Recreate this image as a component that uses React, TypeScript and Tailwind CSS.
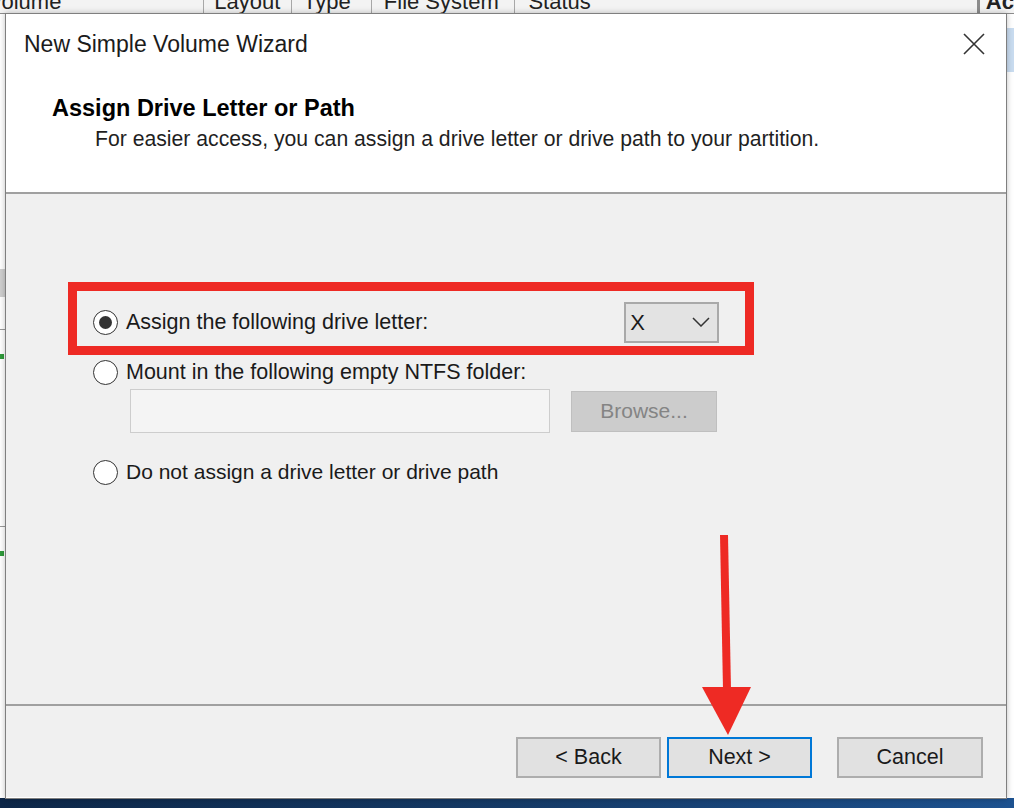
import React from 'react';

const Radio: React.FC<{ checked?: boolean }> = ({ checked }) => (
  <span className="w-[25px] h-[25px] rounded-full border-[1.5px] border-[#333333] bg-white flex items-center justify-center shrink-0">
    {checked && <span className="w-[13px] h-[13px] rounded-full bg-[#333333]" />}
  </span>
);

const WinButton: React.FC<{ label: string; focused?: boolean; className?: string }> = ({ label, focused, className }) => (
  <button
    className={`h-[41px] w-[145px] bg-[#e1e1e1] text-[21.5px] text-[#1a1a1a] flex items-center justify-center ${
      focused ? 'border-2 border-[#0078d7]' : 'border-2 border-[#adadad]'
    } ${className ?? ''}`}
  >
    {label}
  </button>
);

const App: React.FC = () => {
  return (
    <div className="relative w-[1014px] h-[808px] overflow-hidden bg-white font-['Liberation_Sans',Arial,sans-serif] text-[#1a1a1a]">
      {/* disk management window behind */}
      <div className="flex flex-col h-full">
        <div className="h-[14px] overflow-hidden bg-[#f3f3f3] border-b border-[#8c8c8c] text-[22px] leading-[22px] text-[#222]">
          <div className="flex mt-[-9px] whitespace-nowrap">
            <div className="w-[205px] border-r border-[#a8a8a8] overflow-hidden">
              <span className="ml-[-12px]">Volume</span>
            </div>
            <div className="w-[88px] pl-[10px] border-r border-[#a8a8a8]">Layout</div>
            <div className="w-[80px] pl-[11px] border-r border-[#a8a8a8]">Type</div>
            <div className="w-[144px] pl-[12px] border-r border-[#a8a8a8]">File System</div>
            <div className="w-[466px] pl-[13px] border-r-[3px] border-[#8c8c8c]">Status</div>
            <div className="pl-[6px] font-bold">Ac</div>
          </div>
        </div>
        <div className="flex-1 flex">
          <div className="w-[6px] flex flex-col">
            <div className="h-[255px]" />
            <div className="h-[28px] bg-[#cfcfcf]" />
            <div className="h-[33px] border-b border-[#9a9a9a]" />
            <div className="mt-[24px] h-[5px] w-[4px] bg-[#2f9a3a]" />
            <div className="h-[168px] border-b border-[#9a9a9a]" />
            <div className="mt-[24px] h-[5px] w-[4px] bg-[#2f9a3a]" />
            <div className="flex-1" />
          </div>
          <div className="flex-1" />
          <div className="w-[8px] flex flex-col">
            <div className="h-[14px]" />
            <div className="h-[44px] bg-[#c9dcf0]" />
            <div className="flex-1" />
          </div>
        </div>
        <div className="h-[10px] bg-gradient-to-r from-[#0d2748] via-[#153a66] to-[#1d5290]" />
      </div>

      {/* wizard dialog */}
      <div className="absolute left-[5px] top-[13px] w-[1002px] h-[786px] border border-[#7f7f7f] bg-[#f0f0f0] flex flex-col shadow-[0_0_6px_rgba(0,0,0,0.25)]">
        <div className="h-[180px] bg-white flex flex-col border-b-2 border-[#a0a0a0]">
          <div className="h-[60px] flex items-center justify-between pl-[18px] pr-[21px]">
            <span className="text-[23px] text-[#1b1b1b]">New Simple Volume Wizard</span>
            <svg width="22" height="22" viewBox="0 0 22 22">
              <path d="M1 1 L21 21 M21 1 L1 21" stroke="#333" strokeWidth="1.6" fill="none" />
            </svg>
          </div>
          <div className="mt-[21px] pl-[46px] text-[23.5px] leading-[26px] font-bold text-black">
            Assign Drive Letter or Path
          </div>
          <div className="mt-[6px] pl-[89px] text-[21.2px] leading-[24px] text-[#1f1f1f]">
            For easier access, you can assign a drive letter or drive path to your partition.
          </div>
        </div>

        <div className="flex-1 flex flex-col pt-[103px] pl-[87px] border-b-2 border-[#a0a0a0]">
          <div className="h-[50px] flex items-center">
            <Radio checked />
            <span className="ml-[8px] text-[21.5px]">Assign the following drive letter:</span>
            <div className="ml-[196px] h-[41px] w-[95px] bg-[#e3e3e3] border-2 border-[#a9a9a9] flex items-center justify-between pl-[4px] pr-[7px]">
              <span className="text-[22px]">X</span>
              <svg width="18" height="10" viewBox="0 0 18 10">
                <path d="M1 1 L9 9 L17 1" stroke="#333" strokeWidth="1.5" fill="none" />
              </svg>
            </div>
          </div>
          <div className="mt-[11px] h-[28px] flex items-center">
            <Radio />
            <span className="ml-[8px] text-[21.5px]">Mount in the following empty NTFS folder:</span>
          </div>
          <div className="mt-[3px] ml-[37px] flex items-center gap-[21px]">
            <div className="h-[44px] w-[420px] bg-[#f4f4f4] border border-[#cdcdcd]" />
            <div className="h-[41px] w-[146px] bg-[#cccccc] border border-[#bfbfbf] text-[21px] text-[#848484] flex items-center justify-center">
              Browse...
            </div>
          </div>
          <div className="mt-[25px] h-[28px] flex items-center">
            <Radio />
            <span className="ml-[8px] text-[21px]">Do not assign a drive letter or drive path</span>
          </div>
        </div>

        <div className="h-[92px] flex items-start justify-end pt-[31px] pr-[23px] border-b border-white">
          <WinButton label="< Back" className="w-[144px]" />
          <WinButton label="Next >" focused className="ml-[6px]" />
          <WinButton label="Cancel" className="ml-[25px] w-[146px]" />
        </div>
      </div>

      {/* annotations */}
      <div className="absolute left-[68px] top-[282px] w-[686px] h-[73px] border-[9px] border-[#ee2a24]" />
      <svg className="absolute left-[698px] top-[532px]" width="58" height="206" viewBox="0 0 58 206">
        <path d="M22 3 L30 3 L33 158 L25 158 Z" fill="#ee2a24" />
        <path d="M4 155 L53 155 L30 203 Z" fill="#ee2a24" />
      </svg>
    </div>
  );
};

export default App;
